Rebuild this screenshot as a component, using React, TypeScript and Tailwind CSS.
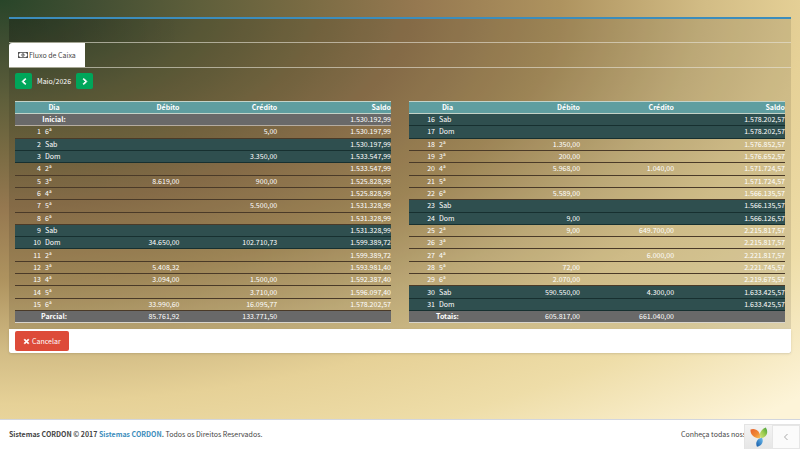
import { FaChevronLeft, FaChevronRight, FaRegMoneyBillAlt, FaTimes } from "react-icons/fa";
import clsx from "clsx";

type Day = { day: number; week: string; debit?: string; credit?: string; balance: string };

const firstHalf: Day[] = [
  { day: 1, week: "6ª", credit: "5,00", balance: "1.530.197,99" },
  { day: 2, week: "Sab", balance: "1.530.197,99" },
  { day: 3, week: "Dom", credit: "3.350,00", balance: "1.533.547,99" },
  { day: 4, week: "2ª", balance: "1.533.547,99" },
  { day: 5, week: "3ª", debit: "8.619,00", credit: "900,00", balance: "1.525.828,99" },
  { day: 6, week: "4ª", balance: "1.525.828,99" },
  { day: 7, week: "5ª", credit: "5.500,00", balance: "1.531.328,99" },
  { day: 8, week: "6ª", balance: "1.531.328,99" },
  { day: 9, week: "Sab", balance: "1.531.328,99" },
  { day: 10, week: "Dom", debit: "34.650,00", credit: "102.710,73", balance: "1.599.389,72" },
  { day: 11, week: "2ª", balance: "1.599.389,72" },
  { day: 12, week: "3ª", debit: "5.408,32", balance: "1.593.981,40" },
  { day: 13, week: "4ª", debit: "3.094,00", credit: "1.500,00", balance: "1.592.387,40" },
  { day: 14, week: "5ª", credit: "3.710,00", balance: "1.596.097,40" },
  { day: 15, week: "6ª", debit: "33.990,60", credit: "16.095,77", balance: "1.578.202,57" },
];

const secondHalf: Day[] = [
  { day: 16, week: "Sab", balance: "1.578.202,57" },
  { day: 17, week: "Dom", balance: "1.578.202,57" },
  { day: 18, week: "2ª", debit: "1.350,00", balance: "1.576.852,57" },
  { day: 19, week: "3ª", debit: "200,00", balance: "1.576.652,57" },
  { day: 20, week: "4ª", debit: "5.968,00", credit: "1.040,00", balance: "1.571.724,57" },
  { day: 21, week: "5ª", balance: "1.571.724,57" },
  { day: 22, week: "6ª", debit: "5.589,00", balance: "1.566.135,57" },
  { day: 23, week: "Sab", balance: "1.566.135,57" },
  { day: 24, week: "Dom", debit: "9,00", balance: "1.566.126,57" },
  { day: 25, week: "2ª", debit: "9,00", credit: "649.700,00", balance: "2.215.817,57" },
  { day: 26, week: "3ª", balance: "2.215.817,57" },
  { day: 27, week: "4ª", credit: "6.000,00", balance: "2.221.817,57" },
  { day: 28, week: "5ª", debit: "72,00", balance: "2.221.745,57" },
  { day: 29, week: "6ª", debit: "2.070,00", balance: "2.219.675,57" },
  { day: 30, week: "Sab", debit: "590.550,00", credit: "4.300,00", balance: "1.633.425,57" },
  { day: 31, week: "Dom", balance: "1.633.425,57" },
];

type FlowTableProps = {
  days: Day[];
  opening?: string;
  totalLabel: string;
  debit: string;
  credit: string;
  cols: string[];
};

function FlowTable({ days, opening, totalLabel, debit, credit, cols }: FlowTableProps) {
  return (
    <table className="w-full h-[222px] table-fixed border-collapse text-white text-right leading-[11px]">
      <colgroup>
        {cols.map((c, i) => (
          <col key={i} className={c} />
        ))}
      </colgroup>
      <thead>
        <tr className="bg-[#5f9ea0] border-y border-[#c4d3c8]">
          <th colSpan={2} className="text-center">Dia</th>
          <th>Débito</th>
          <th>Crédito</th>
          <th>Saldo</th>
        </tr>
      </thead>
      <tbody>
        {opening && (
          <tr className="bg-[#696969] border-b border-[#b5aca0]">
            <th colSpan={2} className="text-center">Inicial:</th>
            <td />
            <td />
            <td>{opening}</td>
          </tr>
        )}
        {days.map((d) => {
          const weekend = d.week === "Sab" || d.week === "Dom";
          return (
            <tr
              key={d.day}
              className={clsx("border-b", weekend ? "bg-[#2f4f4f] border-[#173030]" : "border-[#4a3a28]")}
            >
              <td>{d.day}</td>
              <td className="text-left pl-1">{d.week}</td>
              <td>{d.debit}</td>
              <td>{d.credit}</td>
              <td>{d.balance}</td>
            </tr>
          );
        })}
      </tbody>
      <tfoot>
        <tr className="bg-[#696969] border-b border-[#d8d4cc]">
          <th colSpan={2} className="text-center">{totalLabel}</th>
          <td>{debit}</td>
          <td>{credit}</td>
          <td />
        </tr>
      </tfoot>
    </table>
  );
}

function YiiLogo() {
  return (
    <svg viewBox="0 0 18 20" className="w-[18px] h-5" aria-hidden="true">
      <defs>
        <linearGradient id="leafOrange" x1="0" y1="0" x2="1" y2="1">
          <stop offset="0" stopColor="#e8622c" />
          <stop offset="0.6" stopColor="#f08a35" />
          <stop offset="1" stopColor="#f7c35a" />
        </linearGradient>
        <linearGradient id="leafGreen" x1="1" y1="0" x2="0" y2="1">
          <stop offset="0" stopColor="#3f9e3a" />
          <stop offset="0.5" stopColor="#9ccb50" />
          <stop offset="1" stopColor="#d8e684" />
        </linearGradient>
        <linearGradient id="leafBlue" x1="1" y1="0" x2="0" y2="1">
          <stop offset="0" stopColor="#6fc0f0" />
          <stop offset="1" stopColor="#1257a6" />
        </linearGradient>
      </defs>
      <path d="M0.500 2.500C5.500 0.500 11 4.500 10.200 11.300C5 11.500 0 8.500 0.500 2.500Z" fill="url(#leafOrange)" />
      <path d="M15.800 0.500C18.800 5 17 10.200 10.800 11.500C8.400 7.500 10.500 2.500 15.800 0.500Z" fill="url(#leafGreen)" />
      <path d="M12 10.800C14 14.500 12 18.800 7 19.800C5 15.500 7.200 11.500 12 10.800Z" fill="url(#leafBlue)" />
    </svg>
  );
}

export default function App() {
  return (
    <div className="min-h-screen flex flex-col text-[7px] leading-[11px] text-[#333333] font-['Noto_Sans_CJK_SC','Open_Sans',sans-serif] bg-[radial-gradient(ellipse_100%_89%_at_0%_0%,#284529_0%,#434f33_12%,#5f5f3b_25%,#796b43_38%,#957850_52%,#ae935f_70%,#d2bc85_88%,#e6d197_101%,#eedda8_118%,#fdf4d8_141%)]">
      <main className="flex-1 px-[9px] pt-[17px]">
        <section className="border-t-2 border-[#3c8dbc] bg-black/10">
          <header className="h-[23px] bg-[linear-gradient(90deg,rgba(0,0,0,0.16)_0%,rgba(0,0,0,0)_22%)]" />
          <nav className="flex border-y border-[#e8e4d8]/60">
            <a
              href="#fluxo"
              className="flex items-center gap-px h-6 px-[9px] rounded-tl-[3px] bg-white text-[#444444]"
            >
              <FaRegMoneyBillAlt className="w-[10px] h-[10px]" />
              Fluxo de Caixa
            </a>
          </nav>

          <div id="fluxo" className="px-[6px] pt-[5px] pb-[6px]">
            <div className="flex items-center gap-[5px] h-4 text-white">
              <button
                type="button"
                aria-label="Mês anterior"
                className="flex items-center justify-center w-[17px] h-4 rounded-[2px] bg-[#00a65a]"
              >
                <FaChevronLeft className="w-2 h-[7px] stroke-current stroke-[60]" />
              </button>
              <span>Maio/2026</span>
              <button
                type="button"
                aria-label="Próximo mês"
                className="flex items-center justify-center w-[17px] h-4 rounded-[2px] bg-[#00a65a]"
              >
                <FaChevronRight className="w-2 h-[7px] stroke-current stroke-[60]" />
              </button>
            </div>

            <div className="grid grid-cols-2 gap-[18px] mt-3">
              <FlowTable
                days={firstHalf}
                opening="1.530.192,99"
                totalLabel="Parcial:"
                debit="85.761,92"
                credit="133.771,50"
                cols={["w-[26px]", "w-[52px]", "w-[23%]", "w-[26%]", ""]}
              />
              <FlowTable
                days={secondHalf}
                totalLabel="Totais:"
                debit="605.817,00"
                credit="661.040,00"
                cols={["w-[26px]", "w-[51px]", "w-[25%]", "w-[25%]", ""]}
              />
            </div>
          </div>

          <footer className="bg-white px-[6px] py-[2px] rounded-b-[2px] shadow-sm">
            <button
              type="button"
              className="flex items-center gap-[2px] h-5 px-2 rounded-[2px] bg-[#dd4b39] text-white"
            >
              <FaTimes className="w-[7px] h-[7px] stroke-current stroke-[40]" />
              Cancelar
            </button>
          </footer>
        </section>
      </main>

      <footer className="flex justify-between border-t border-[#d2d6de] bg-white px-[9px] pt-[9px] pb-[9px] text-[#444444]">
        <p>
          <strong>
            Sistemas CORDON © 2017{" "}
            <a href="#sistemas" className="text-[#3c8dbc]">Sistemas CORDON</a>.
          </strong>{" "}
          Todos os Direitos Reservados.
        </p>
        <p className="w-[110px] whitespace-nowrap">Conheça todas nossas</p>
      </footer>

      <div className="fixed right-0 bottom-0 flex h-[25px] border-t border-l border-[#e4e4e4] bg-[#fbfbfb]">
        <a href="#debug" aria-label="Yii Debugger" className="flex items-center justify-center w-[27px] bg-linear-to-b from-[#f4f4f4] to-[#e6e6e6]">
          <YiiLogo />
        </a>
        <button
          type="button"
          aria-label="Abrir barra"
          className="flex items-center justify-center w-7 border border-[#e6e6e6] text-[#aaaaaa]"
        >
          <svg viewBox="0 0 6 8" className="w-[6px] h-2" fill="none" stroke="currentColor" aria-hidden="true">
            <path d="M4.500 1L1.500 4L4.500 7" />
          </svg>
        </button>
      </div>
    </div>
  );
}
